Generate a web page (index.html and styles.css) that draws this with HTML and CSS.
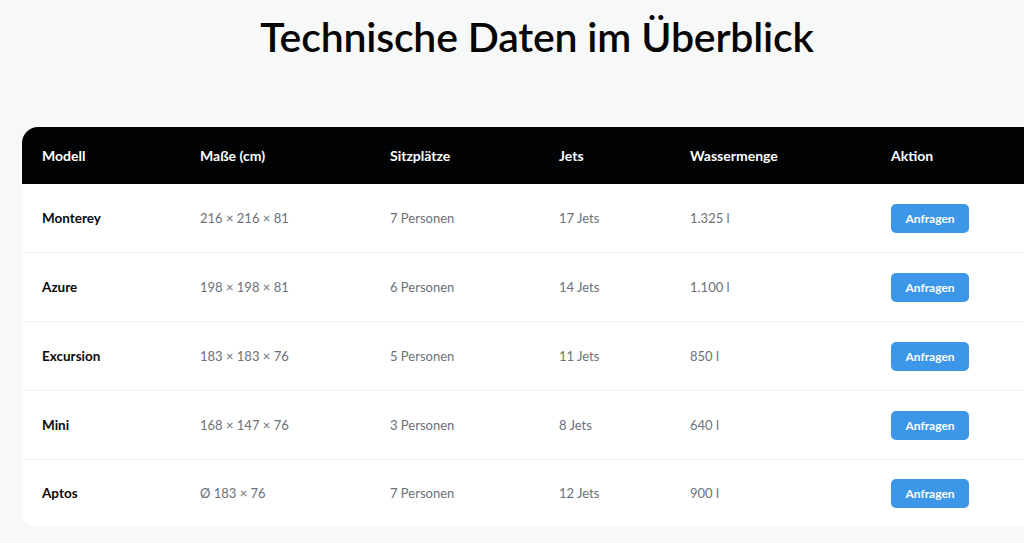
FILE: index.html
```html
<!DOCTYPE html>
<html lang="de">
<head>
<meta charset="utf-8">
<title>Technische Daten</title>
<link rel="stylesheet" href="styles.css">
</head>
<body>
<main class="wrap">
  <h1 class="title">Technische Daten im Überblick</h1>
  <div class="card">
    <table class="specs">
      <colgroup>
        <col class="c1"><col class="c2"><col class="c3"><col class="c4"><col class="c5"><col class="c6">
      </colgroup>
      <thead>
        <tr><th>Modell</th><th>Maße (cm)</th><th>Sitzplätze</th><th>Jets</th><th>Wassermenge</th><th>Aktion</th></tr>
      </thead>
      <tbody>
        <tr><td class="name">Monterey</td><td>216 × 216 × 81</td><td>7 Personen</td><td>17 Jets</td><td>1.325 l</td><td><button class="btn">Anfragen</button></td></tr>
        <tr><td class="name">Azure</td><td>198 × 198 × 81</td><td>6 Personen</td><td>14 Jets</td><td>1.100 l</td><td><button class="btn">Anfragen</button></td></tr>
        <tr><td class="name">Excursion</td><td>183 × 183 × 76</td><td>5 Personen</td><td>11 Jets</td><td>850 l</td><td><button class="btn">Anfragen</button></td></tr>
        <tr><td class="name">Mini</td><td>168 × 147 × 76</td><td>3 Personen</td><td>8 Jets</td><td>640 l</td><td><button class="btn">Anfragen</button></td></tr>
        <tr><td class="name">Aptos</td><td>Ø 183 × 76</td><td>7 Personen</td><td>12 Jets</td><td>900 l</td><td><button class="btn">Anfragen</button></td></tr>
      </tbody>
    </table>
  </div>
</main>
</body>
</html>
```
FILE: styles.css
```css
html, body {
  margin: 0;
  padding: 0;
  background: #f7f8f8;
  overflow: hidden;
}
body {
  font-family: "Lato", "Inter", sans-serif;
  color: #0b0b0b;
}
.wrap {
  width: 1030px;
  margin-left: 22px;
  padding-top: 9px;
}
.title {
  margin: 0;
  text-align: center;
  font-family: "Lato", sans-serif;
  font-weight: 600;
  font-size: 41px;
  line-height: 56px;
  letter-spacing: -0.2px;
  color: #050505;
}
.card {
  margin-top: 62px;
  background: #ffffff;
  border-radius: 16px 16px 12px 12px;
  overflow: hidden;
}
.specs {
  width: 100%;
  border-collapse: collapse;
  table-layout: fixed;
}
.c1 { width: 158px; }
.c2 { width: 190px; }
.c3 { width: 169px; }
.c4 { width: 131px; }
.c5 { width: 201px; }
.c6 { width: auto; }
.specs thead tr {
  background: #020304;
}
.specs th {
  height: 57px;
  padding: 0 0 0 20px;
  text-align: left;
  color: #ffffff;
  font-weight: 700;
  font-size: 14px;
}
.specs td {
  height: 68px;
  padding: 0 0 0 20px;
  font-size: 13px;
  color: #6b7178;
  border-bottom: 1px solid #f1f2f3;
}
.specs tbody tr:last-child td {
  border-bottom: none;
  height: 66px;
}
.specs td.name {
  color: #0a0a0a;
  font-weight: 700;
  font-size: 13.5px;
}
.btn {
  font-family: "Lato", sans-serif;
  background: #3c97e8;
  color: #ffffff;
  border: none;
  border-radius: 5px;
  width: 78px;
  height: 29px;
  font-size: 12px;
  font-weight: 700;
  padding: 0;
  cursor: pointer;
}
```
